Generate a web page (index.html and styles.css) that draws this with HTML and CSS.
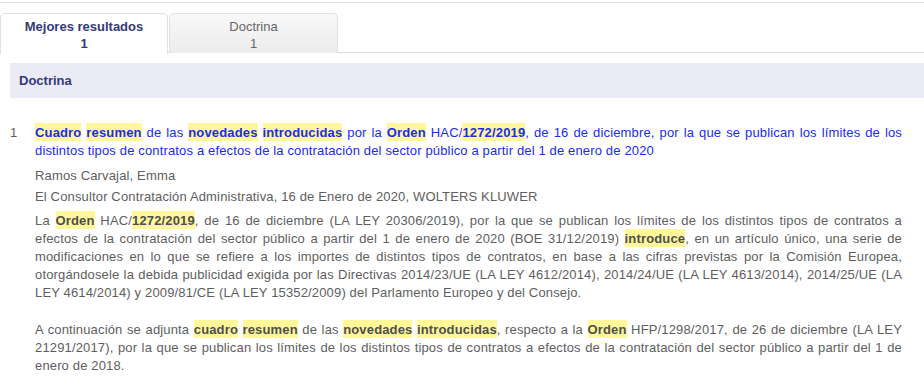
FILE: index.html
```html
<!DOCTYPE html>
<html lang="es">
<head>
<meta charset="utf-8">
<link rel="stylesheet" href="styles.css">
</head>
<body>
<div class="topline"></div>
<div class="tabs">
  <div class="tab active"><span class="tab-label">Mejores resultados</span><span class="tab-count">1</span></div>
  <div class="tab"><span class="tab-label">Doctrina</span><span class="tab-count">1</span></div>
</div>
<div class="section-header">Doctrina</div>
<div class="result">
  <div class="num">1</div>
  <div class="body">
    <p class="title"><mark>Cuadro</mark> <mark>resumen</mark> de las <mark>novedades</mark> <mark>introducidas</mark> por la <mark>Orden</mark> HAC/<mark>1272/2019</mark>, de 16 de diciembre, por la que se publican los límites de los distintos tipos de contratos a efectos de la contratación del sector público a partir del 1 de enero de 2020</p>
    <p class="author">Ramos Carvajal, Emma</p>
    <p class="source">El Consultor Contratación Administrativa, 16 de Enero de 2020, WOLTERS KLUWER</p>
    <p class="text">La <mark>Orden</mark> HAC/<mark>1272/2019</mark>, de 16 de diciembre (LA LEY 20306/2019), por la que se publican los límites de los distintos tipos de contratos a efectos de la contratación del sector público a partir del 1 de enero de 2020 (BOE 31/12/2019) <mark>introduce</mark>, en un artículo único, una serie de modificaciones en lo que se refiere a los importes de distintos tipos de contratos, en base a las cifras previstas por la Comisión Europea, otorgándosele la debida publicidad exigida por las Directivas 2014/23/UE (LA LEY 4612/2014), 2014/24/UE (LA LEY 4613/2014), 2014/25/UE (LA LEY 4614/2014) y 2009/81/CE (LA LEY 15352/2009) del Parlamento Europeo y del Consejo.</p>
    <p class="text second">A continuación se adjunta <mark>cuadro</mark> <mark>resumen</mark> de las <mark>novedades</mark> <mark>introducidas</mark>, respecto a la <mark>Orden</mark> HFP/1298/2017, de 26 de diciembre (LA LEY 21291/2017), por la que se publican los límites de los distintos tipos de contratos a efectos de la contratación del sector público a partir del 1 de enero de 2018.</p>
  </div>
</div>
</body>
</html>
```

FILE: styles.css
```css
* { box-sizing: border-box; }
html, body { margin: 0; padding: 0; background: #fff; }
body {
  font-family: "Liberation Sans", Arial, sans-serif;
  font-size: 13px;
  color: #5e5e5e;
}
.topline {
  margin-top: 2px;
  height: 1px;
  background: #e2e2e2;
}
.tabs {
  display: flex;
  margin-top: 10px;
  border-bottom: 1px solid #dcdcdc;
  height: 40px;
}
.tab {
  width: 169px;
  height: 40px;
  display: flex;
  flex-direction: column;
  align-items: center;
  padding-top: 4px;
  line-height: 17px;
  border: 1px solid #e2e2e2;
  border-bottom: none;
  border-radius: 5px 5px 0 0;
  background: linear-gradient(#f8f8f8, #ececec);
  color: #666;
  margin-bottom: -1px;
}
.tab + .tab { margin-left: 1px; }
.tab.active {
  width: 168px;
  background: #fff;
  color: #34397a;
  font-weight: bold;
  height: 41px;
}
.section-header {
  margin: 10px 0 0 10px;
  height: 35px;
  background: #ebebf5;
  color: #34397a;
  font-weight: bold;
  padding-left: 9px;
  display: flex;
  align-items: center;
}
.result {
  display: flex;
  padding: 26px 22px 0 10px;
}
.num {
  width: 25px;
  flex: none;
  line-height: 18px;
}
.body { flex: 1; }
.body p {
  margin: 0;
  line-height: 18px;
  text-align: justify;
  letter-spacing: 0.15px;
}
mark {
  background: #fff799;
  font-weight: bold;
  color: inherit;
  padding: 2px 0 1px;
}
.title { color: #1a2cf0; }
.author { margin-top: 7px !important; }
.source { margin-top: 3px !important; }
.text { margin-top: 6px !important; }
.text.second { margin-top: 19px !important; }
.text mark { color: #4e4e4e; }
```
